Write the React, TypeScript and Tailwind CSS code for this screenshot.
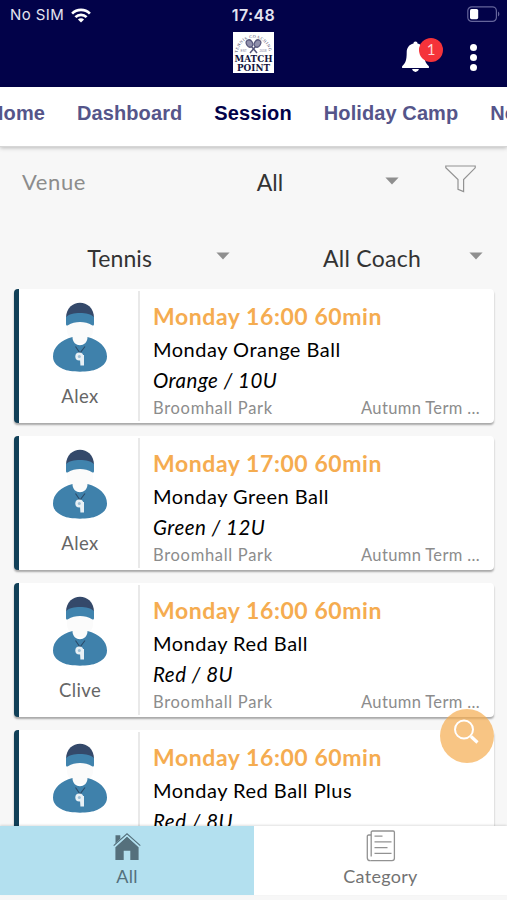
import { useState } from 'react'
import clsx from 'clsx'

type Session = {
  time: string
  title: string
  level: string
  venue: string
  term: string
  coach: string
}

const sessions: Session[] = [
  { time: 'Monday 16:00 60min', title: 'Monday Orange Ball', level: 'Orange / 10U', venue: 'Broomhall Park', term: 'Autumn Term ...', coach: 'Alex' },
  { time: 'Monday 17:00 60min', title: 'Monday Green Ball', level: 'Green / 12U', venue: 'Broomhall Park', term: 'Autumn Term ...', coach: 'Alex' },
  { time: 'Monday 16:00 60min', title: 'Monday Red Ball', level: 'Red / 8U', venue: 'Broomhall Park', term: 'Autumn Term ...', coach: 'Clive' },
  { time: 'Monday 16:00 60min', title: 'Monday Red Ball Plus', level: 'Red / 8U', venue: 'Broomhall Park', term: 'Autumn Term ...', coach: 'Clive' },
]

const tabs = ['Home', 'Dashboard', 'Session', 'Holiday Camp', 'News']

function StatusBar() {
  return (
    <div className="grid h-[30px] grid-cols-3 items-center px-2.5 font-['Inter',sans-serif] text-[15px] text-[#e4e4f0]">
      <div className="flex items-center gap-[7px]">
        <span className="tracking-[0.4px]">No SIM</span>
        <svg width="20" height="15" viewBox="0 0 20 15" fill="none" stroke="#fff" strokeWidth="2.7">
          <path d="M1.1 5.6a12.7 12.7 0 0 1 17.8 0" />
          <path d="M4.4 9.1a8 8 0 0 1 11.2 0" />
          <path d="M10 14.6 6.9 11.5a4.4 4.4 0 0 1 6.2 0Z" fill="#fff" stroke="none" />
        </svg>
      </div>
      <div className="text-center text-[16px] font-semibold tracking-[0.4px]">17:48</div>
      <svg className="-mr-[3px] mb-0.5 justify-self-end" width="33" height="17" viewBox="0 0 33 17">
        <rect x="0.8" y="0.8" width="28.6" height="14.6" rx="4" fill="none" stroke="#65659b" strokeWidth="1.2" />
        <rect x="3" y="3" width="8.2" height="10.2" rx="1.6" fill="#fff" />
        <path d="M31 5.6c1.8.8 1.8 4.2 0 5Z" fill="#65659b" />
      </svg>
    </div>
  )
}

function ClubLogo() {
  return (
    <svg width="41" height="41" viewBox="0 0 41 41">
      <rect width="41" height="41" fill="#fff" />
      <defs>
        <path id="logo-arc" d="M4.6 21a16 17 0 0 1 31.8 0" />
      </defs>
      <text fontFamily="Liberation Serif, serif" fontSize="4.2" fill="#3a3a62" textLength="46">
        <textPath href="#logo-arc">TENNIS COACHING</textPath>
      </text>
      <g stroke="#55557a" strokeWidth="1.2" fill="#9090ac">
        <path d="m18 14 6 7M23 14l-6 7" strokeWidth="1.5" />
        <ellipse cx="16.5" cy="11.5" rx="3" ry="3.8" transform="rotate(-32 16.5 11.5)" />
        <ellipse cx="24.5" cy="11.5" rx="3" ry="3.8" transform="rotate(32 24.5 11.5)" />
      </g>
      <g fontFamily="Liberation Sans, sans-serif" fontSize="3.2" fill="#77779a">
        <text x="7.5" y="20">EST</text>
        <text x="26.5" y="20">2018</text>
      </g>
      <g fontFamily="DejaVu Serif, Liberation Serif, serif" fontWeight="700" fontSize="9.6" fill="#141440">
        <text x="1.5" y="30.3" textLength="38" lengthAdjust="spacingAndGlyphs">MATCH</text>
        <text x="4" y="38.900" textLength="33" lengthAdjust="spacingAndGlyphs">POINT</text>
      </g>
    </svg>
  )
}

function Header() {
  return (
    <header className="h-[87px] bg-[#020249]">
      <StatusBar />
      <div className="grid grid-cols-3 items-start px-2.5">
        <div />
        <div className="flex justify-center pt-0.5">
          <ClubLogo />
        </div>
        <div className="flex items-start justify-end">
          <button className="relative mt-[11px] mr-[41px]" aria-label="Notifications">
            <svg width="27" height="32" viewBox="0 0 27 32" fill="#fff">
              <path d="M13.5.4c1.3 0 2 .8 2 2.2 4.5 1 6.8 4.5 6.8 9 0 7.4 1 10.800 4.600 13.600V27H.1v-1.800c3.600-2.800 4.600-6.200 4.600-13.600 0-4.500 2.300-8 6.800-9 0-1.400.7-2.200 2-2.200Z" />
              <path d="M10.1 28.1h6.800c-.5 1.800-1.600 2.800-3.400 2.800s-2.900-1-3.400-2.800Z" />
            </svg>
            <span className="absolute -top-[3px] left-[17px] flex size-6 items-center justify-center rounded-full bg-[#f5333a] pb-0.5 font-['Lato',sans-serif] text-[15px] leading-none text-[#ffd9d9]">
              1
            </span>
          </button>
          <button className="mt-3.5 mr-5 flex flex-col gap-[3px]" aria-label="Menu">
            <span className="size-[7px] rounded-full bg-white" />
            <span className="size-[7px] rounded-full bg-white" />
            <span className="size-[7px] rounded-full bg-white" />
          </button>
        </div>
      </div>
    </header>
  )
}

function Caret() {
  return (
    <svg width="14" height="8" viewBox="0 0 14 8" fill="#8f8f8f">
      <path d="M.4.4h13.2L7 7.4Z" />
    </svg>
  )
}

function CoachAvatar() {
  return (
    <svg width="54" height="70" viewBox="0 0 54 70">
      <path d="M14 20h26v8c0 6-5 10-6 13H20c-1-3-6-7-6-13Z" fill="#fbfbfb" />
      <path d="M19.500 35C8 38 0 45 0 54.500c0 7 5 10 10 12.500 7 3.500 27 3.500 34 0 5-2.500 10-5.500 10-12.500C54 45 46 38 34.500 35 34.500 46 19.500 46 19.500 35Z" fill="#3f81ab" />
      <path d="M22.500 44.500l4.500 6.500 5-6.500" fill="none" stroke="#2b4a68" strokeWidth="1.100" />
      <circle cx="26.300" cy="54.500" r="4" fill="#e8f0f5" />
      <path d="M27 53h4v10.500h-3.600L27 57Z" fill="#e8f0f5" />
      <circle cx="26.300" cy="54.600" r="1.500" fill="#9fc0d5" />
      <path d="M13 16C13-4.500 41-4.500 41 16v1H13Z" fill="#34496a" />
      <path d="M13 15C18 9.500 36 9.500 41 15v7c0 1.600-1 1.900-2 1.200-7-4.200-17-4.200-24 0-1 .7-2 .4-2-1.200Z" fill="#4083ad" />
    </svg>
  )
}

function SessionCard({ session }: { session: Session }) {
  return (
    <article className="flex h-[134px] shrink-0 overflow-hidden rounded-[4px] border-l-[5px] border-[#114058] bg-white shadow-[0_2px_2px_rgba(0,0,0,0.32)]">
      <div className="my-0.5 flex w-[121px] shrink-0 flex-col items-center border-r-2 border-[#e9e9e9] pt-[11px] pl-[3px]">
        <CoachAvatar />
        <span className="mt-[10px] text-[18.5px] leading-7 tracking-[0.4px] text-[#666]">{session.coach}</span>
      </div>
      <div className="flex min-w-0 flex-1 flex-col whitespace-nowrap pt-[11px] pr-3.5 pl-[13px]">
        <div className="text-[23px] leading-8 font-bold tracking-[0.57px] text-[#f5ac50]">{session.time}</div>
        <div className="text-[20px] leading-[35px] tracking-[0.5px] text-black">{session.title}</div>
        <div className="text-[20.5px] leading-[26px] tracking-[0.5px] text-black italic">{session.level}</div>
        <div className="flex justify-between text-[16.5px] leading-[30px] text-[#8c8c8c]">
          <span className="tracking-[0.7px]">{session.venue}</span>
          <span className="tracking-[0.35px]">{session.term}</span>
        </div>
      </div>
    </article>
  )
}

function Filters() {
  return (
    <section className="grid h-[142px] grid-rows-[72px_70px] text-[23px] text-[#333]">
      <div className="flex items-center pb-1">
        <span className="w-[210px] pl-[22px] text-[22px] tracking-[0.6px] text-[#8c8c8c]">Venue</span>
        <button className="flex w-[189px] items-center justify-between">
          <span className="w-[120px] pt-0.5 text-center">All</span>
          <Caret />
        </button>
        <svg className="mb-1 ml-[46px]" width="31" height="28" viewBox="0 0 31 28" fill="none" stroke="#929292" strokeWidth="1.2">
          <path d="M.8 1h29.400v1.800L18.600 14.600v12l-5.600-2.200v-9.800L.8 2.800Z" />
        </svg>
      </div>
      <div className="grid grid-cols-[253px_254px] items-start pt-[18px]">
        <button className="flex items-center justify-end pr-[23px]">
          <span className="mr-[64px] pt-1 tracking-[0.1px]">Tennis</span>
          <Caret />
        </button>
        <button className="flex items-center justify-end pr-6">
          <span className="mr-[48px] pt-1 tracking-[0.25px]">All Coach</span>
          <Caret />
        </button>
      </div>
    </section>
  )
}

export default function App() {
  const [activeTab, setActiveTab] = useState('Session')

  return (
    <div className="relative flex h-[900px] w-[507px] flex-col overflow-hidden bg-[#f7f7f7] font-['Lato',sans-serif]">
      <Header />

      <nav className="flex h-[60px] justify-center overflow-hidden border-b border-[#d6d6d6] bg-white shadow-[0_1px_4px_rgba(0,0,0,0.25)]">
        <div className="flex shrink-0 gap-[32px] pt-[11px] pl-[25px]">
          {tabs.map((tab) => (
            <button
              key={tab}
              onClick={() => setActiveTab(tab)}
              className={clsx(
                "h-[30px] whitespace-nowrap font-['Liberation_Sans',sans-serif] text-[20px] font-bold tracking-[0.1px]",
                tab === activeTab ? 'text-[#020249]' : 'text-[#55558a]'
              )}
            >
              {tab}
            </button>
          ))}
        </div>
      </nav>

      <Filters />

      <main className="flex h-[537px] flex-col gap-[13px] overflow-hidden pr-[13px] pl-3.5">
        {sessions.map((session) => (
          <SessionCard key={session.title} session={session} />
        ))}
      </main>

      <button className="absolute top-[709px] left-[440px] size-[54px] rounded-full bg-[#f5ac50]/70" aria-label="Search">
        <svg width="54" height="54" viewBox="0 0 54 54" fill="none" stroke="#fff" strokeWidth="2">
          <circle cx="24" cy="20.5" r="9" />
          <path d="m31 27.5 6.5 6" strokeWidth="3.2" />
        </svg>
      </button>

      {/* Bottom navigation */}
      <footer className="z-10 grid h-[69px] grid-cols-[254px_253px] bg-white text-[18px] tracking-[0.3px] text-[#737373] shadow-[0_-1px_2px_rgba(0,0,0,0.12)]">
        <button className="flex flex-col items-center bg-[#b3e0ef] pt-[7px] text-[#55707c]">
          <svg width="28" height="28" viewBox="0 0 28 28" fill="#55707c">
            <path d="M2.5 2.2h4.8v3.6l-4.8 4.8Z" />
            <path d="M14 3.6 25.6 14.2v12.8h-8.3v-9.2h-6.6v9.2H2.4V14.2Z" />
            <path d="M.7 12.6 14 .8l13.3 11.8" fill="none" stroke="#55707c" strokeWidth="1.2" />
            <path d="M1.8 13.7 14 2.7l12.2 11" fill="none" stroke="#b3e0ef" strokeWidth="1.1" />
          </svg>
          <span className="leading-[30px]">All</span>
        </button>
        <button className="flex flex-col items-center pt-1">
          <svg width="30" height="32" viewBox="0 0 30 32" fill="none" stroke="#929292" strokeWidth="1.3">
            <path d="M5.2 5H2.600c-.8 0-1.300.5-1.300 1.300v21.400c0 2 1 3 3 3" />
            <path d="M5.200 26.500V2.300c0-.8.5-1.300 1.300-1.300h20.600c.8 0 1.300.5 1.300 1.300v26c0 1.600-.8 2.400-2.400 2.400H4.300" />
            <path d="M8.500 6.200h8M8.500 11.900h17M8.500 17.600h13M8.500 23.300h17" />
          </svg>
          <span className="leading-[29px]">Category</span>
        </button>
      </footer>
    </div>
  )
}
